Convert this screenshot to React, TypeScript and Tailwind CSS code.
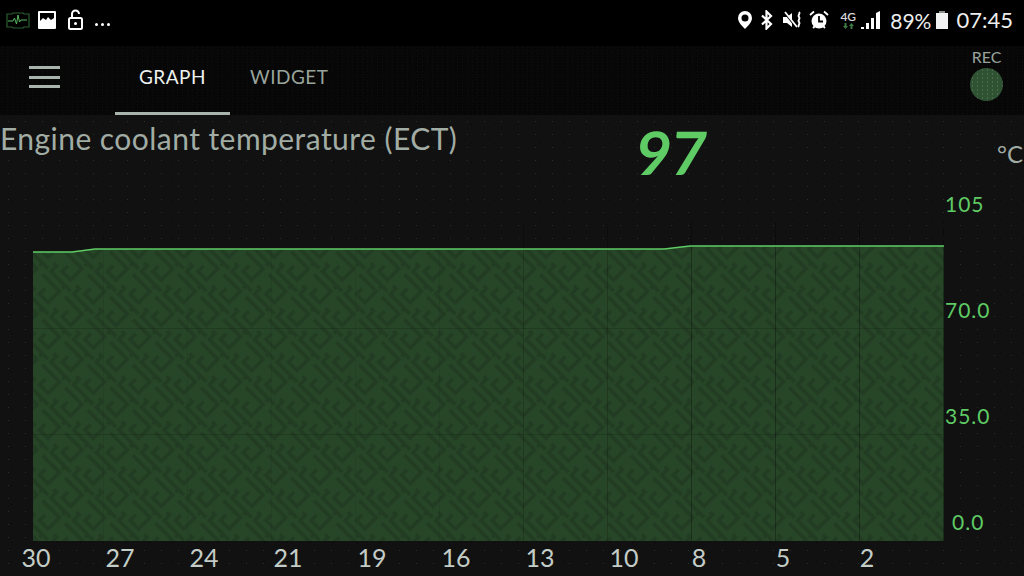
import React from "react";

const font = { fontFamily: "Lato, 'Noto Sans', sans-serif" };

function StatusLeft() {
  return (
    <div className="flex items-center">
      <svg width="24" height="18" viewBox="0 0 24 18" className="ml-[6px]" fill="none" stroke="#2a5f30" strokeWidth="1.2">
        <path d="M1 3h5l1-1h10l1 1h5v13h-5l-1 1H7l-1-1H1z" />
        <path d="M2 10h5l1.500-3 2 6 1.500-9 1.500 7 1.500-2h6" stroke="#58b860" strokeWidth="1" />
      </svg>
      <svg width="20" height="20" viewBox="0 0 20 20" className="ml-[7px]">
        <path fillRule="evenodd" d="M2 1h16a1 1 0 0 1 1 1v16a1 1 0 0 1-1 1H2a1 1 0 0 1-1-1V2a1 1 0 0 1 1-1zM3 3v8l3-3 3 2 2-3 3 3 3-2V3z" fill="#fff" />
      </svg>
      <svg width="18" height="22" viewBox="0 0 18 22" className="ml-[10px]" fill="none" stroke="#fff" strokeWidth="2">
        <rect x="2" y="9" width="13" height="11" rx="1.500" />
        <path d="M5 9V5a3.500 3.500 0 0 1 7 0" />
        <circle cx="8.500" cy="14.500" r="1.500" fill="#fff" stroke="none" />
      </svg>
      <div className="ml-[10px] mt-[8px] flex gap-[3px]">
        <span className="size-[3px] rounded-full bg-white" />
        <span className="size-[3px] rounded-full bg-white" />
        <span className="size-[3px] rounded-full bg-white" />
      </div>
    </div>
  );
}

function StatusRight() {
  return (
    <div className="flex items-center text-white">
      <svg width="16" height="20" viewBox="0 0 16 20">
        <path fillRule="evenodd" fill="#fff" d="M8 1a7 7 0 0 0-7 7c0 4 4 8 7 11 3-3 7-7 7-11a7 7 0 0 0-7-7zm0 3.500a3.500 3.500 0 1 1 0 7 3.500 3.500 0 0 1 0-7z" />
      </svg>
      <svg width="14" height="20" viewBox="0 0 14 20" className="ml-[7px]" fill="none" stroke="#fff" strokeWidth="2.2">
        <path d="M2 5.500 11 14l-4.500 4.500v-17L11 6l-9 8.500" />
      </svg>
      <svg width="20" height="20" viewBox="0 0 20 20" className="ml-[9px]">
        <path d="M0 7h4l5-4v14l-5-4H0z" fill="#fff" />
        <path d="M1 2l12 15" stroke="#000" strokeWidth="2" />
        <path d="M2 2l12 15" stroke="#fff" strokeWidth="1.800" />
        <path d="M16 2c2 2-2 3 0 5s-2 3 0 5-2 3 0 5" stroke="#fff" strokeWidth="2" fill="none" />
      </svg>
      <svg width="20" height="20" viewBox="0 0 20 20" className="ml-[6px]">
        <circle cx="10" cy="11" r="7.500" fill="#fff" />
        <path d="M10 6v5.500h4" stroke="#000" strokeWidth="1.800" fill="none" />
        <path d="M1 5l4-3.500M19 5l-4-3.500M4 18l2-2M16 18l-2-2" stroke="#fff" strokeWidth="1.800" />
      </svg>
      <div className="ml-[11px] flex w-[16px] flex-col items-center leading-none">
        <span className="text-[12px] leading-[11px] font-semibold text-[#d8d8d8]">4G</span>
        <svg width="13" height="6" viewBox="0 0 12 6" className="mt-px">
          <path d="M3 6 0.500 3H2V0h2v3h1.500zM9 0l2.500 3H10v3H8V3H6.500z" fill="#3f7a45" />
        </svg>
      </div>
      <svg width="21" height="20" viewBox="0 0 21 20" className="ml-[5px]">
        <path d="M0 19v-2h3v2zM5 19v-6h3v6zM10 19V8h3v11zM15 19V3l4-2v18z" fill="#fff" />
      </svg>
      <span className="ml-[8px] text-[21px] leading-none text-[#eeeeee]">89%</span>
      <svg width="14" height="20" viewBox="0 0 14 20" className="ml-[4px]">
        <rect x="1" y="3" width="12" height="16" fill="#f2f2f2" />
        <rect x="4" y="1" width="6" height="2" fill="#8a8f8a" />
      </svg>
      <span className="ml-[7px] text-[22px] leading-none text-[#eeeeee]">07:45</span>
    </div>
  );
}

function Chart() {
  const xs = [103, 187, 271, 355, 439, 523, 607, 691, 775, 859, 943];
  return (
    <svg width="911" height="319" viewBox="33 222 911 319" className="block">
      <defs>
        <pattern id="maze" width="32" height="32" patternUnits="userSpaceOnUse" patternTransform="rotate(45 0 0)">
          <rect width="32" height="32" fill="#274527" />
          <path d="M0 4H24V20H12V12M0 20H4V28H32M24 28V32" fill="none" stroke="#223c23" strokeWidth="3.500" />
        </pattern>
      </defs>
      <path d="M33 252H72L95 249H664L690 246H944V541H33Z" fill="url(#maze)" />
      {xs.map((x) => (
        <path key={x} d={`M${x + 0.5} 222V541`} stroke="#000" strokeOpacity={x > 650 ? 0.3 : x > 500 ? 0.18 : 0.05} />
      ))}
      <path d="M33 328.500H944M33 434.500H944" stroke="#000" strokeOpacity="0.14" />
      <path d="M33 252H72L95 249H664L690 246H944" fill="none" stroke="#5fcb65" strokeWidth="1.600" />
    </svg>
  );
}

const yLabels = [
  { t: "105", c: "" },
  { t: "70.0", c: "" },
  { t: "35.0", c: "" },
  { t: "0.0", c: "pl-[7px]" },
];
const xLabels = ["30", "27", "24", "21", "19", "16", "13", "10", "8", "5", "2"];

export default function App() {
  return (
    <div className="flex h-[576px] w-[1024px] flex-col overflow-hidden bg-black" style={font}>
      <div className="flex h-[46px] shrink-0 items-start justify-between pt-[9px] pr-[11px]">
        <StatusLeft />
        <StatusRight />
      </div>

      <div className="flex h-[69px] shrink-0 bg-[#070707] bg-[radial-gradient(#0f0f0f_0.7px,transparent_0.9px),radial-gradient(#020202_0.7px,transparent_0.9px)] bg-[length:5px_3px,7px_5px]">
        <div className="mt-[20px] ml-[29px] flex h-[22px] w-[31px] flex-col justify-between">
          <span className="h-[3px] bg-[#a8b4ac]" />
          <span className="h-[3px] bg-[#a8b4ac]" />
          <span className="h-[3px] bg-[#a8b4ac]" />
        </div>
        <div className="ml-[55px] flex h-full w-[115px] items-center justify-center border-b-[3px] border-[#a8b4ac] pb-[3px] text-[19px] tracking-[0.5px] text-[#eef2ef]">
          GRAPH
        </div>
        <div className="ml-[20px] flex h-full items-center pb-[6px] text-[19px] tracking-[0.5px] text-[#98a49c]">
          WIDGET
        </div>
        <div className="mr-[21px] ml-auto flex flex-col items-center pt-[2px]">
          <span className="text-[16px] leading-[18px] text-[#98a49c]">REC</span>
          <span className="mt-[2px] size-[33px] rounded-full bg-[#2f5233] bg-[radial-gradient(#4a6c4d_0.8px,transparent_1px)] bg-[length:5px_4px]" />
        </div>
      </div>

      <div className="flex min-h-0 flex-1 flex-col bg-[#111111] bg-[radial-gradient(#223225_0.6px,transparent_0.8px),radial-gradient(#060606_0.6px,transparent_0.8px)] bg-[length:17px_13px,23px_19px]">
        <div className="flex h-[79px] shrink-0">
          <div className="w-[637px] shrink-0 pt-[5px] text-[30px] leading-[36px] tracking-[0.45px] whitespace-nowrap text-[#a1aca5]">
            Engine coolant temperature (ECT)
          </div>
          <div className="w-[360px] shrink-0 text-[60px] leading-[74px] font-bold text-[#5fcb65]">
            <span className="inline-block -skew-x-6">97</span>
          </div>
          <div className="shrink-0 pt-[23px] text-[24px] leading-[32px] whitespace-nowrap text-[#a1aca5]">°C</div>
        </div>

        <div className="flex h-[347px] shrink-0 pl-[33px]">
          <div className="pt-[28px]">
            <Chart />
          </div>
          <div className="flex flex-col gap-[86px] pl-px">
            {yLabels.map((l) => (
              <div key={l.t} className={`h-[20px] text-[21px] leading-[20px] tracking-[1px] text-[#5fcb65] ${l.c}`}>
                {l.t}
              </div>
            ))}
          </div>
        </div>

        <div className="-ml-[6px] flex flex-1 items-center pb-[2px] text-[25px] leading-none text-[#c3ccc6]">
          {xLabels.map((l) => (
            <span key={l} className={`w-[84px] shrink-0 text-center ${l === "8" ? "-ml-[9px]" : ""}`}>
              {l}
            </span>
          ))}
        </div>
      </div>
    </div>
  );
}
